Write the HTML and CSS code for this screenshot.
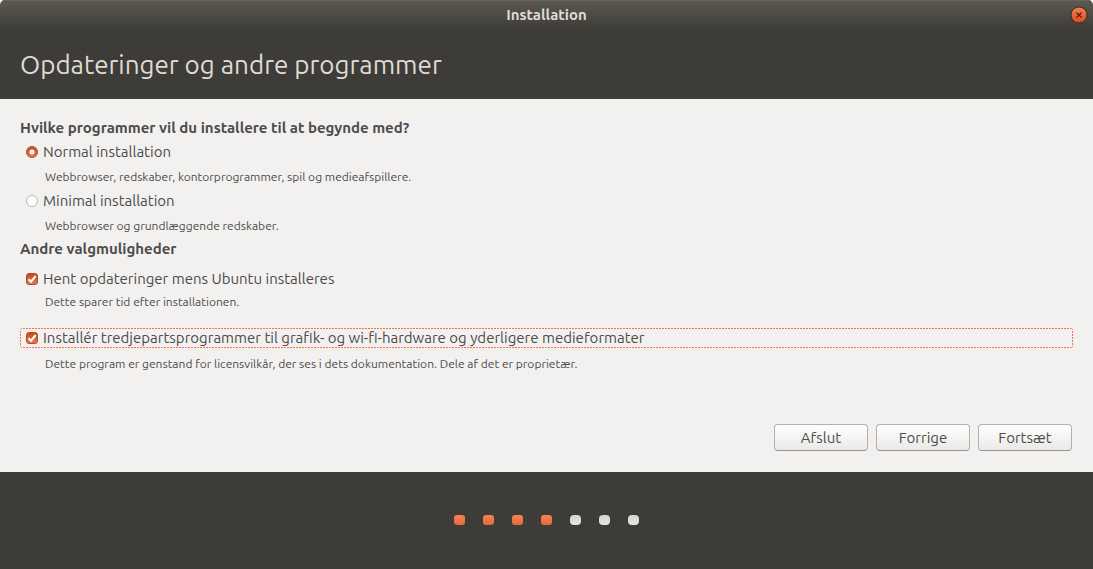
FILE: index.html
```html
<!DOCTYPE html>
<html lang="da">
<head>
<meta charset="utf-8">
<meta name="viewport" content="width=device-width, initial-scale=1">
<title>Installation</title>
<link rel="stylesheet" href="styles.css">
</head>
<body>
<div class="window">
  <header class="titlebar">
    <span class="titlebar-text">Installation</span>
    <button class="close" type="button" aria-label="Luk">
      <svg viewBox="0 0 18 18" width="18" height="18" aria-hidden="true">
        <defs>
          <linearGradient id="close-fill" x1="0" y1="0" x2="0" y2="1">
            <stop offset="0" stop-color="#f68154"/>
            <stop offset="1" stop-color="#e2481c"/>
          </linearGradient>
        </defs>
        <circle cx="9" cy="9" r="8" fill="url(#close-fill)" stroke="#33302a"/>
        <path d="M6.500 6.500l5 5M11.500 6.500l-5 5" stroke="#4a2414" stroke-width="1.300" fill="none"/>
      </svg>
    </button>
  </header>
  <div class="heading">
    <h1 class="heading-text">Opdateringer og andre programmer</h1>
  </div>
  <form class="content">
    <fieldset class="group">
      <legend class="group-title">Hvilke programmer vil du installere til at begynde med?</legend>
      <label class="option"><input class="radio" type="radio" name="mode" checked>Normal installation</label>
      <p class="hint hint-radio">Webbrowser, redskaber, kontorprogrammer, spil og medieafspillere.</p>
      <label class="option"><input class="radio" type="radio" name="mode">Minimal installation</label>
      <p class="hint hint-radio">Webbrowser og grundlæggende redskaber.</p>
    </fieldset>
    <fieldset class="group">
      <legend class="group-title">Andre valgmuligheder</legend>
      <label class="option option-updates"><input class="check" type="checkbox" checked>Hent opdateringer mens Ubuntu installeres</label>
      <p class="hint hint-updates">Dette sparer tid efter installationen.</p>
      <label class="option option-focused"><input class="check" type="checkbox" checked>Installér tredjepartsprogrammer til grafik- og wi-fi-hardware og yderligere medieformater</label>
      <p class="hint hint-license">Dette program er genstand for licensvilkår, der ses i dets dokumentation. Dele af det er proprietær.</p>
    </fieldset>
    <div class="actions">
      <button class="button" type="button">Afslut</button>
      <button class="button" type="button">Forrige</button>
      <button class="button" type="button">Fortsæt</button>
    </div>
  </form>
  <footer class="progress">
    <span class="dot dot-done"></span>
    <span class="dot dot-done"></span>
    <span class="dot dot-done"></span>
    <span class="dot dot-done"></span>
    <span class="dot"></span>
    <span class="dot"></span>
    <span class="dot"></span>
  </footer>
</div>
</body>
</html>
```
FILE: styles.css
```css
* {
  box-sizing: border-box;
}

body {
  margin: 0;
  background: #fff;
  color: #4c4c4c;
  font-family: Ubuntu, "Noto Sans", sans-serif;
  font-size: 15px;
  line-height: 20px;
}

.window {
  display: flex;
  flex-direction: column;
  min-height: 100vh;
  overflow: hidden;
  border-radius: 5px 5px 0 0;
  background: #f2f1f0;
}

.titlebar {
  display: grid;
  grid-template-columns: 1fr auto 1fr;
  align-items: center;
  height: 30px;
  padding: 0 5px;
  background: linear-gradient(#5c5950, #3d3c38);
  box-shadow: inset 0 1px #66635a;
}

.titlebar-text {
  grid-column: 2;
  color: #dfdbd2;
  font-weight: 700;
}

.close {
  display: flex;
  justify-self: end;
  padding: 0;
  border: 0;
  background: none;
}

.heading {
  padding: 18px 20px 17px;
  background: #3d3c38;
}

.heading-text {
  margin: 0;
  color: #dfdbd2;
  font-size: 26px;
  font-weight: 400;
  line-height: 34px;
}

.content {
  display: flex;
  flex: 1;
  flex-direction: column;
  padding: 19px 20px 21px;
}

.group {
  min-width: 0;
  margin: 0;
  padding: 0;
  border: 0;
}

.group + .group {
  margin-top: 3px;
}

.group-title {
  padding: 0;
  font-weight: 700;
}

.option {
  display: flex;
  align-items: center;
  gap: 5px;
  margin-top: 4px;
  padding-left: 6px;
}

.option-updates {
  margin-top: 10px;
}

.option-focused {
  --dash: #f0764a 0 2px, transparent 2px 3px;
  margin-top: 16px;
  border-radius: 3px;
  background:
    repeating-linear-gradient(90deg, var(--dash)) top / 100% 1px no-repeat,
    repeating-linear-gradient(90deg, var(--dash)) bottom / 100% 1px no-repeat,
    repeating-linear-gradient(var(--dash)) left / 1px 100% no-repeat,
    repeating-linear-gradient(var(--dash)) right / 1px 100% no-repeat;
}

.hint {
  margin: 0;
  padding: 0 0 2px 25px;
  font-size: 12px;
  line-height: 17px;
}

.hint-radio {
  margin-top: 6px;
}

.hint-updates {
  margin-top: 4px;
}

.hint-license {
  margin-top: 7px;
}

.radio,
.check {
  flex: none;
  width: 12px;
  height: 12px;
  margin: 0;
  appearance: none;
  border: 1px solid #b8b5b2;
  background: #fff;
}

.radio {
  border-radius: 50%;
}

.check {
  border-radius: 3px;
}

.radio:checked {
  border-color: #b24a24;
  background:
    radial-gradient(circle, #fff 0 2px, transparent 3px),
    linear-gradient(#c94f22, #e27b53);
}

.check:checked {
  border-color: #b24a24;
  background:
    url("data:image/svg+xml,%3Csvg xmlns='http://www.w3.org/2000/svg' viewBox='0 0 10 10'%3E%3Cpath d='M1.500 5.200L4 7.700L8.700 2' fill='none' stroke='white' stroke-width='2'/%3E%3C/svg%3E") center / 10px 10px no-repeat,
    linear-gradient(#c44a1e, #e27b53);
}

.actions {
  display: flex;
  justify-content: flex-end;
  gap: 8px;
  margin-top: auto;
  padding-right: 1px;
}

.button {
  width: 94px;
  height: 27px;
  padding: 0;
  border: 1px solid #b3b0ad;
  border-bottom-color: #979491;
  border-radius: 4px;
  background: linear-gradient(#fff, #ebe9e7);
  color: #4c4c4c;
  font: inherit;
}

.progress {
  display: flex;
  align-items: center;
  justify-content: center;
  gap: 18px;
  height: 97px;
  padding-bottom: 2px;
  background: #3d3c38;
}

.dot {
  width: 11px;
  height: 10px;
  border-radius: 4px;
  background: linear-gradient(#d4d4d4, #e6e6e6);
}

.dot-done {
  border-radius: 3px;
  background: linear-gradient(#f58256, #e9693a);
}
```
